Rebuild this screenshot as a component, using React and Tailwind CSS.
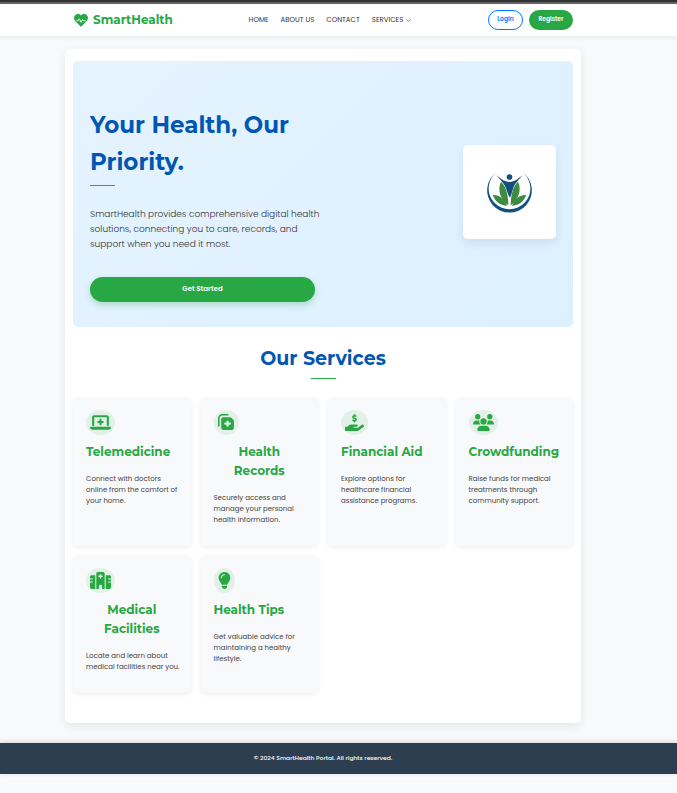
import React from "react";
import {
  FaLaptopMedical,
  FaNotesMedical,
  FaHandHoldingDollar,
  FaUsers,
  FaHospital,
  FaLightbulb,
} from "react-icons/fa6";
import { ChevronDown } from "lucide-react";

const services = [
  { title: "Telemedicine", text: "Connect with doctors online from the comfort of your home.", Icon: FaLaptopMedical, iconClass: "w-[21px]" },
  { title: "Health Records", text: "Securely access and manage your personal health information.", Icon: FaNotesMedical, iconClass: "w-[17px] -scale-y-100" },
  { title: "Financial Aid", text: "Explore options for healthcare financial assistance programs.", Icon: FaHandHoldingDollar, iconClass: "w-[19px]" },
  { title: "Crowdfunding", text: "Raise funds for medical treatments through community support.", Icon: FaUsers, iconClass: "w-[21px]" },
  { title: "Medical Facilities", text: "Locate and learn about medical facilities near you.", Icon: FaHospital, iconClass: "w-[21px]" },
  { title: "Health Tips", text: "Get valuable advice for maintaining a healthy lifestyle.", Icon: FaLightbulb, iconClass: "w-[13px]" },
];

function HeartPulse() {
  return (
    <svg viewBox="0 0 14 13" className="h-[13px] w-[14px]" aria-hidden="true">
      <path fill="#28a745" d="M7 1.6C8.5-.4 11.400-.3 12.900 1.300C14.400 2.900 14.300 5.300 12.800 6.900L7.400 12.600Q7 13 6.600 12.600L1.200 6.900C-.3 5.300-.4 2.900 1.100 1.300C2.600-.3 5.500-.4 7 1.600Z" />
      <path fill="none" stroke="#fff" strokeWidth="0.9" strokeLinejoin="round" d="M2.500 6.800H4L5.300 4.800L7 8.300L8.500 5.400L9.400 6.800H11.500" />
    </svg>
  );
}

function Emblem() {
  return (
    <svg viewBox="39 45 279 282" className="size-full" role="img" aria-label="SmartHealth emblem">
      <g fill="#14507f">
        <path d="M140 126A67 67 0 1 0 217 126A62.6 62.6 0 1 1 140 126Z" />
        <circle cx="178.5" cy="141" r="8.5" />
        <path d="M139 135C154 148 163 155 178.5 156C194 155 203 148 218 135C206 150 197 158 191 170C187 181 184 195 180 203C174 195 171 181 166 170C160 158 151 150 139 135Z" />
      </g>
      <g fill="#3d8a41">
        <path d="M153 155C165 165 175 190 175 226C154 212 140 180 153 155Z" />
        <path d="M204 155C192 165 182 190 182 226C203 212 217 180 204 155Z" />
        <path d="M128 195C146 193 161 205 171 227C150 226 136 215 128 195Z" />
        <path d="M229 195C211 193 196 205 186 227C207 226 221 215 229 195Z" />
      </g>
    </svg>
  );
}

function ServiceCard({ title, text, Icon, iconClass }) {
  return (
    <article className="flex flex-col items-start rounded-[5px] bg-[#f8f9fa] px-[13px] pt-3 pb-[21px] shadow-[0_1px_5px_rgba(0,0,0,0.08)]">
      <span className="flex h-[25px] items-center rounded-[50%] bg-[#28a745]/10 px-1 text-[#28a745]">
        <Icon className={"h-[17px] " + iconClass} />
      </span>
      <h3 className="mt-[7px] text-center font-[Montserrat,Inter,sans-serif] text-[12px] leading-[19px] font-bold text-[#28a745]">
        {title}
      </h3>
      <p className="mt-3 -mr-[6px] text-[7px] leading-[11px] text-[#444]">{text}</p>
    </article>
  );
}

export default function App() {
  return (
    <div className="min-h-screen bg-[#f8f9fa] font-[Poppins,Inter,sans-serif] text-[#333]">
      <div className="h-1 border-b-2 border-[#666] bg-[#333]" />
      <header className="bg-white pr-[31px] shadow-[0_1px_5px_rgba(0,0,0,0.08)]">
        <div className="mx-auto flex h-8 max-w-[500px] items-center justify-between">
          <a href="#" className="flex items-center gap-[5px] pl-px font-[Montserrat,Inter,sans-serif] text-[12px] leading-5 font-bold text-[#28a745]">
            <HeartPulse />
            SmartHealth
          </a>
          <nav className="flex items-center gap-3 text-[7px] leading-3">
            <a href="#">HOME</a>
            <a href="#">ABOUT US</a>
            <a href="#">CONTACT</a>
            <a href="#services" className="flex items-center gap-[2px]">
              SERVICES
              <ChevronDown className="size-[7px]" />
            </a>
          </nav>
          <div className="flex gap-[6px] text-[6px] leading-3 font-semibold">
            <button className="h-5 w-[35px] rounded-full border border-[#007bff] pb-[2px] text-[#007bff]">Login</button>
            <button className="h-5 w-11 rounded-full bg-[#28a745] pb-[2px] text-white">Register</button>
          </div>
        </div>
      </header>

      <div className="pt-[13px] pr-[31px] pb-5">
        <main className="mx-auto max-w-[516px] rounded-[5px] bg-white px-2 pt-3 pb-[30px] shadow-[0_3px_10px_rgba(0,0,0,0.08)]">
          <section className="flex items-center justify-between rounded-[5px] bg-linear-135 from-[#e6f3ff] to-[#dcf0ff] px-[17px] pt-[21px] pb-[25px]">
            <div className="w-60">
              <h1 className="mt-[25px] font-[Montserrat,Inter,sans-serif] text-[23px] leading-[37px] font-bold text-[#0056b3]">
                Your Health, Our Priority.
              </h1>
              <div className="mt-1 h-px w-[25px] bg-[#28a745]" />
              <p className="mt-[21px] text-[9px] leading-[15px] font-light text-[#333]">
                SmartHealth provides comprehensive digital health solutions, connecting you to care, records, and support when you need it most.
              </p>
              <button className="mt-[25px] h-[25px] w-[225px] rounded-full bg-[#28a745] pb-px text-[7px] font-semibold text-white shadow-[0_3px_6px_rgba(40,167,69,0.3)]">
                Get Started
              </button>
            </div>
            <div className="h-[94px] w-[93px] rounded-[5px] bg-white shadow-[0_4px_10px_rgba(0,0,0,0.08)]">
              <Emblem />
            </div>
          </section>

          <section id="services">
            <h2 className="mt-4 text-center font-[Montserrat,Inter,sans-serif] text-[19px] leading-8 font-bold text-[#0056b3]">
              Our Services
            </h2>
            <div className="mx-auto mt-[3px] h-px w-[25px] bg-[#28a745]" />
            <div className="mt-[19px] grid grid-cols-4 gap-[10px]">
              {services.map((service) => (
                <ServiceCard key={service.title} {...service} />
              ))}
            </div>
          </section>
        </main>
      </div>

      <footer className="bg-[#2c3e50] py-[10px] pr-[31px] text-center text-[6px] leading-[11px] font-medium text-white shadow-[0_-1px_5px_rgba(0,0,0,0.15)]">
        <p>© 2024 SmartHealth Portal. All rights reserved.</p>
      </footer>
    </div>
  );
}
